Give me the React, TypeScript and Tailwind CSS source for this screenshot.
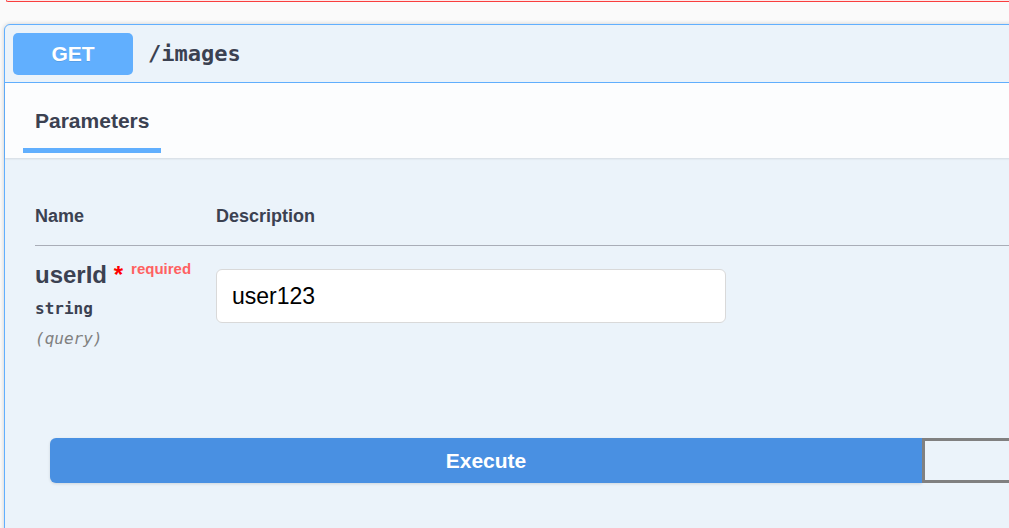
import React from 'react';

const sans = { fontFamily: '"Liberation Sans", Arial, sans-serif' };
const mono = { fontFamily: '"DejaVu Sans Mono", "Liberation Mono", monospace' };

function ParameterRow() {
  return (
    <div className="flex pt-[15px]">
      <div className="w-[181px] shrink-0">
        <div className="text-[24px] font-bold leading-[28px] text-[#3b4151]">
          userId&nbsp;<span className="text-[#ff0000]">*</span>
          <span className="relative top-[-9px] pl-[8px] text-[15px] text-[#ff6161]">required</span>
        </div>
        <div style={mono} className="mt-[2px] text-[16px] font-bold leading-[30px] text-[#3b4151]">
          string
        </div>
        <div style={mono} className="text-[16px] italic leading-[29px] text-[#808080]">
          (query)
        </div>
      </div>
      <div className="pt-[8px]">
        <input
          defaultValue="user123"
          className="block h-[54px] w-[510px] rounded-[6px] border border-[#d9d9d9] bg-white px-[15px] text-[23px] text-black outline-none"
          style={sans}
        />
      </div>
    </div>
  );
}

export default function App() {
  return (
    <div style={sans} className="h-[528px] w-[1009px] overflow-hidden bg-[#fafafa]">
      <div className="ml-[6px] h-[2px] rounded-bl-[6px] border-b border-l border-[#f93e3e] bg-[#fbeaea]" />

      <div className="ml-[4px] mt-[22px] w-[1840px] rounded-[6px] border border-[#61affe] bg-[#ebf3fa] shadow-[0_0_4px_rgba(0,0,0,0.19)]">
        {/* summary */}
        <div className="flex h-[58px] items-center border-b border-[#61affe] px-[8px]">
          <div className="flex h-[42px] w-[120px] items-center justify-center rounded-[5px] bg-[#61affe] text-[21px] font-bold text-white [text-shadow:0_1px_0_rgba(0,0,0,0.1)]">
            GET
          </div>
          <span style={mono} className="ml-[15px] text-[22px] font-bold text-[#3b4151]">
            /images
          </span>
        </div>

        {/* tab header */}
        <div className="h-[75px] bg-[#fcfdfe] pt-[26px] shadow-[0_1px_2px_rgba(0,0,0,0.1)]">
          <div className="ml-[18px] inline-flex flex-col">
            <span className="px-[12px] text-[21px] font-bold leading-[24px] text-[#3b4151]">Parameters</span>
            <span className="mt-[15px] h-[5px] bg-[#61affe]" />
          </div>
        </div>

        {/* parameters table */}
        <div className="pl-[30px]">
          <div className="flex border-b border-[#a9adb7] pb-[18px] pt-[47px] text-[18px] font-bold leading-[22px] text-[#3b4151]">
            <span className="w-[181px]">Name</span>
            <span>Description</span>
          </div>
          <ParameterRow />
        </div>

        {/* execute */}
        <div className="flex pb-[60px] pl-[45px] pt-[85px]">
          <button className="h-[45px] w-[872px] rounded-l-[6px] bg-[#4990e2] text-[21px] font-bold text-white shadow-[0_1px_3px_rgba(0,0,0,0.12)]">
            Execute
          </button>
          <button className="h-[45px] w-[872px] rounded-r-[6px] border-[3px] border-[#808080] bg-transparent" />
        </div>
      </div>
    </div>
  );
}
